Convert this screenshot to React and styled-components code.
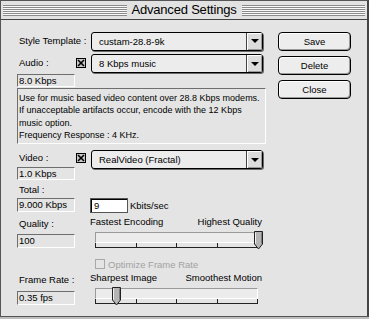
import React from 'react';
import styled, { createGlobalStyle } from 'styled-components';

const GlobalStyle = createGlobalStyle`
	html, body {
		margin: 0;
		padding: 0;
		background: #bdbdbd;
	}
	body {
		font-family: "Liberation Sans", Arial, sans-serif;
		color: #000;
	}
`;

const Window = styled.div`
	width: 369px;
	height: 317px;
	box-sizing: border-box;
	background: #e4e4e4;
	border: 1px solid #555;
	border-right: 2px solid #444;
	display: flex;
	flex-direction: column;
`;

const TitleBar = styled.div`
	height: 18px;
	border-bottom: 1px solid #444;
	display: flex;
	align-items: center;
	gap: 5px;
	padding: 0 2px 0 2px;
	background: #e2e2e2;
`;

const Stripes = styled.div`
	flex: 1;
	height: 11px;
	background: repeating-linear-gradient(to bottom, #8a8a8a 0 1px, #fafafa 1px 2px);
`;

const Title = styled.span`
	font-size: 13px;
	letter-spacing: -0.2px;
	line-height: 18px;
`;

const Body = styled.div`
	display: flex;
	padding-left: 16px;
`;

const Main = styled.div`
	width: 249px;
	display: flex;
	flex-direction: column;
`;

const Side = styled.div`
	width: 73px;
	margin-left: 12px;
	padding-top: 12px;
	display: flex;
	flex-direction: column;
	gap: 5px;
`;

const Row = styled.div`
	display: flex;
	align-items: ${(p) => p.$align || 'flex-start'};
	margin-top: ${(p) => p.$mt || 0}px;
`;

const Stack = styled.div`
	width: 58px;
	display: flex;
	flex-direction: column;
`;

const Label = styled.div`
	font-size: 9.5px;
	white-space: nowrap;
	padding-left: 2px;
	width: ${(p) => (p.$w ? p.$w + 'px' : 'auto')};
	height: ${(p) => p.$h || 12}px;
	line-height: ${(p) => p.$h || 12}px;
	margin-top: ${(p) => p.$mt || 0}px;
	box-sizing: border-box;
`;

const ReadBox = styled.div`
	box-sizing: border-box;
	width: 58px;
	height: ${(p) => p.$h || 14}px;
	margin-top: ${(p) => p.$mt || 0}px;
	border-top: 1px solid #6e6e6e;
	border-left: 1px solid #6e6e6e;
	border-bottom: 1px solid #fff;
	border-right: 1px solid #fff;
	font-size: 9.5px;
	line-height: ${(p) => (p.$h || 14) - 2}px;
	padding-left: 1px;
	white-space: nowrap;
`;

const CheckCol = styled.div`
	width: 16px;
	padding-left: 1px;
	box-sizing: border-box;
	padding-top: ${(p) => p.$pt || 0}px;
`;

const Popup = styled.div`
	box-sizing: border-box;
	width: 172px;
	height: 19px;
	border: 1px solid #000;
	border-radius: 3px;
	background: #ececec;
	box-shadow: 1px 1px 0 #6a6a6a;
	display: flex;
	align-items: center;
	overflow: hidden;
`;

const PopupText = styled.span`
	flex: 1;
	padding-left: 7px;
	font-size: 9.5px;
	white-space: nowrap;
`;

const ArrowBox = styled.span`
	width: 15px;
	height: 17px;
	border-left: 1px solid #444;
	background: #dcdcdc;
	box-shadow: inset 1px 1px 0 #fff, inset -1px -1px 0 #9a9a9a;
	display: flex;
	align-items: center;
	justify-content: center;
	&::after {
		content: '';
		border-left: 4px solid transparent;
		border-right: 4px solid transparent;
		border-top: 4px solid #000;
	}
`;

const Button = styled.div`
	box-sizing: border-box;
	height: 19px;
	border: 1px solid #000;
	border-radius: 4px;
	background: #ededed;
	box-shadow: inset 1px 1px 0 #fff, inset -1px -1px 0 #9c9c9c;
	font-size: 9.5px;
	display: flex;
	align-items: center;
	justify-content: center;
`;

const TextBox = styled.div`
	box-sizing: border-box;
	width: 249px;
	height: 56px;
	margin-top: 1px;
	border-top: 1px solid #6e6e6e;
	border-left: 1px solid #6e6e6e;
	border-bottom: 1px solid #fff;
	border-right: 1px solid #fff;
	padding: 3px 0 0 1px;
	font-size: 9px;
	line-height: 12.3px;
	> div {
		white-space: nowrap;
	}
`;

const EditField = styled.div`
	box-sizing: border-box;
	width: 38px;
	height: 15px;
	margin-left: 15px;
	background: #fff;
	border: 1px solid #555;
	box-shadow: inset 1px 1px 0 #000;
	font-size: 9.5px;
	line-height: 13px;
	padding-left: 3px;
`;

const Unit = styled.span`
	font-size: 9.5px;
	margin-left: 2px;
	line-height: 15px;
`;

const SliderBlock = styled.div`
	width: 173px;
	margin-left: 15px;
	display: flex;
	flex-direction: column;
`;

const SliderLabels = styled.div`
	display: flex;
	justify-content: space-between;
	font-size: 9.5px;
	height: 12px;
	line-height: 12px;
	padding-right: 1px;
	white-space: nowrap;
`;

const TrackArea = styled.div`
	position: relative;
	width: 163px;
	margin-left: 5px;
	margin-top: 4px;
`;

const Track = styled.div`
	box-sizing: border-box;
	height: 11px;
	border-top: 1px solid #9a9a9a;
	border-left: 1px solid #9a9a9a;
	border-bottom: 1px solid #fff;
	border-right: 1px solid #fff;
	background: #ececec;
`;

const Ticks = styled.div`
	height: 5px;
	box-sizing: border-box;
	border-bottom: 1px solid #222;
	display: flex;
	justify-content: space-between;
	> span {
		width: 1px;
		height: 5px;
		background: #222;
	}
`;

const Thumb = styled.svg`
	position: absolute;
	top: -1px;
`;

const OptRow = styled.div`
	display: flex;
	align-items: center;
	height: 12px;
	margin-top: 10px;
	margin-left: 78px;
	gap: 3px;
	font-size: 9.5px;
	color: #a2a2a2;
	white-space: nowrap;
`;

function CheckBox({ checked, disabled }) {
	return (
		<svg width="10" height="10" viewBox="0 0 10 10" style={{ display: 'block' }}>
			<rect x="0.5" y="0.5" width="9" height="9" fill={disabled ? 'none' : '#c8c8c8'} stroke={disabled ? '#a8a8a8' : '#000'} />
			{checked && (
				<g stroke="#000" strokeWidth="1.6">
					<line x1="2" y1="2" x2="8" y2="8" />
					<line x1="8" y1="2" x2="2" y2="8" />
				</g>
			)}
		</svg>
	);
}

function Slider({ left, right, value }) {
	const x = Math.round(value * 163) - 4;
	return (
		<SliderBlock>
			<SliderLabels>
				<span>{left}</span>
				<span>{right}</span>
			</SliderLabels>
			<TrackArea>
				<Track />
				<Ticks>
					<span />
					<span />
					<span />
					<span />
					<span />
				</Ticks>
				<Thumb width="9" height="19" viewBox="0 0 9 19" style={{ left: x }}>
					<path d="M0.5 0.5 H8.5 V13 L4.5 18 L0.5 13 Z" fill="#b4b4b4" stroke="#222" />
					<path d="M1.5 1.5 V12.6" stroke="#f2f2f2" />
					<path d="M7.5 1.5 V12.6" stroke="#7a7a7a" />
				</Thumb>
			</TrackArea>
		</SliderBlock>
	);
}

export default function App() {
	return (
		<>
			<GlobalStyle />
			<Window>
				<TitleBar>
					<Stripes />
					<Title>Advanced Settings</Title>
					<Stripes />
				</TitleBar>
				<Body>
					<Main>
						<Row $mt={11} $align="center">
							<Label $w={74} $h={20}>Style Template :</Label>
							<Popup>
								<PopupText>custam-28.8-9k</PopupText>
								<ArrowBox />
							</Popup>
						</Row>
						<Row $mt={3}>
							<Stack>
								<Label $h={18}>Audio :</Label>
								<ReadBox $mt={2} $h={13}>8.0 Kbps</ReadBox>
							</Stack>
							<CheckCol $pt={4}>
								<CheckBox checked />
							</CheckCol>
							<Popup>
								<PopupText>8 Kbps music</PopupText>
								<ArrowBox />
							</Popup>
						</Row>
						<TextBox>
							<div>Use for music based video content over 28.8 Kbps modems.</div>
							<div>If unacceptable artifacts occur, encode with the 12 Kbps</div>
							<div>music option.</div>
							<div>Frequency Response : 4 KHz.</div>
						</TextBox>
						<Row $mt={6}>
							<Stack>
								<Label $h={16}>Video :</Label>
								<ReadBox $mt={1} $h={13}>1.0 Kbps</ReadBox>
							</Stack>
							<CheckCol $pt={3}>
								<CheckBox checked />
							</CheckCol>
							<Popup>
								<PopupText>RealVideo (Fractal)</PopupText>
								<ArrowBox />
							</Popup>
						</Row>
						<Label $mt={4}>Total :</Label>
						<Row $mt={2}>
							<ReadBox>9.000 Kbps</ReadBox>
							<EditField>9</EditField>
							<Unit>Kbits/sec</Unit>
						</Row>
						<Row $mt={3}>
							<Stack>
								<Label $mt={2}>Quality :</Label>
								<ReadBox $mt={4}>100</ReadBox>
							</Stack>
							<Slider left="Fastest Encoding" right="Highest Quality" value={1} />
						</Row>
						<OptRow>
							<CheckBox disabled />
							<span>Optimize Frame Rate</span>
						</OptRow>
						<Row $mt={2}>
							<Stack>
								<Label $mt={2}>Frame Rate :</Label>
								<ReadBox $mt={5}>0.35 fps</ReadBox>
							</Stack>
							<Slider left="Sharpest Image" right="Smoothest Motion" value={0.13} />
						</Row>
					</Main>
					<Side>
						<Button>Save</Button>
						<Button>Delete</Button>
						<Button>Close</Button>
					</Side>
				</Body>
			</Window>
		</>
	);
}
